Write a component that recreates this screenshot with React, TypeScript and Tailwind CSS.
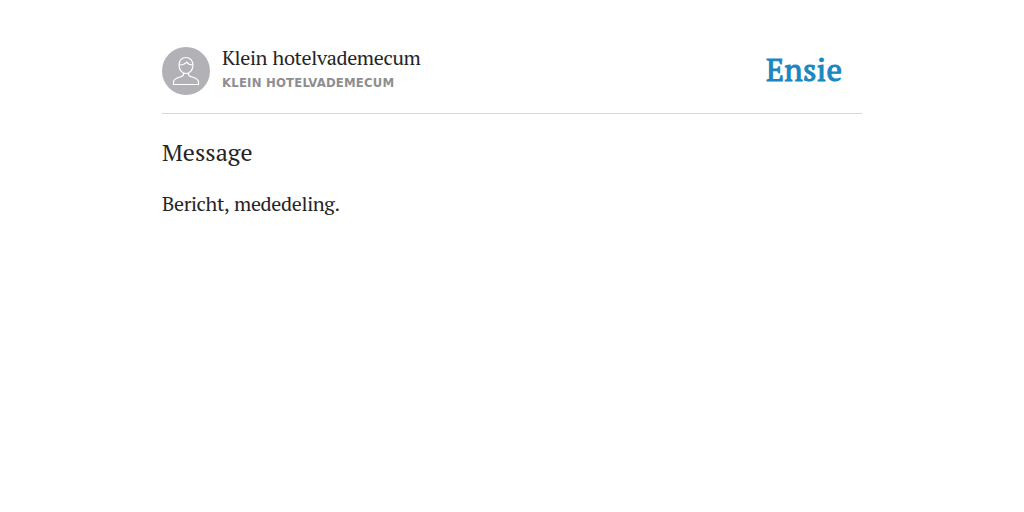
import React from 'react'

const serif = "font-['PT_Serif','Liberation_Serif',serif]"

const Avatar: React.FC = () => (
    <svg className="size-12 shrink-0" viewBox="0 0 48 48" fill="none" aria-hidden="true">
        <circle cx="24" cy="24" r="24" fill="#b2b1b6" />
        <g stroke="#fff" strokeWidth="1.2" strokeLinejoin="round">
            <path d="M24 10.500c-4.200 0-7 3.200-7 7.700 0 4.500 3.200 8.300 7 8.300s7-3.800 7-8.300c0-4.500-2.800-7.700-7-7.700Z" />
            <path d="M17.200 18c3.400 0 6-.9 7.500-2.800 1.200 1.800 3.200 2.800 6.100 2.800" />
            <path d="M21.500 26v1.400c0 1.200-1.300 1.900-3.600 2.600-3.700 1.100-6.400 2-6.400 4.900v2.600h25v-2.600c0-2.900-2.700-3.800-6.400-4.900-2.300-.7-3.600-1.400-3.600-2.600V26" />
        </g>
    </svg>
)

const EntryHeader: React.FC = () => (
    <header className="flex h-[67px] items-start justify-between border-b border-[#d9d9de]">
        <div className="flex gap-3">
            <Avatar />
            <div>
                <h2 className={`${serif} text-[20px] leading-[22px] tracking-[-0.36px] [word-spacing:1px] whitespace-nowrap`}>Klein hotelvademecum</h2>
                <p className="mt-1.5 font-['DejaVu_Sans_Condensed','DejaVu_Sans',sans-serif] text-[13px] leading-4 font-bold tracking-[0.2px] whitespace-nowrap text-[#8e8e91] uppercase">Klein hotelvademecum</p>
            </div>
        </div>
        <div className={`${serif} mt-[5px] mr-[19px] w-[77px] text-[31px] leading-9 tracking-[0.3px] whitespace-nowrap text-[#1b87c1] [-webkit-text-stroke:1px_#1b87c1]`}>
            Ensie
        </div>
    </header>
)

const App: React.FC = () => (
    <div className="min-h-screen bg-white text-[#252525]">
        <main className="mx-auto w-[700px] pt-[47px]">
            <EntryHeader />
            <h1 className={`${serif} mt-[22px] text-[24px] leading-8`}>Message</h1>
            <p className={`${serif} mt-5 text-[20px] leading-8 tracking-[-0.36px] [word-spacing:1px]`}>Bericht, mededeling.</p>
        </main>
    </div>
)

export default App
